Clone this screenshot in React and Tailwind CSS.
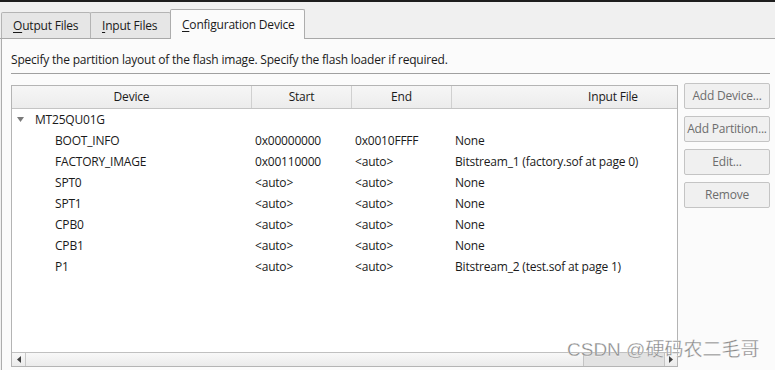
const ROWS = [
  { name: "BOOT_INFO", start: "0x00000000", end: "0x0010FFFF", file: "None" },
  { name: "FACTORY_IMAGE", start: "0x00110000", end: "<auto>", file: "Bitstream_1 (factory.sof at page 0)" },
  { name: "SPT0", start: "<auto>", end: "<auto>", file: "None" },
  { name: "SPT1", start: "<auto>", end: "<auto>", file: "None" },
  { name: "CPB0", start: "<auto>", end: "<auto>", file: "None" },
  { name: "CPB1", start: "<auto>", end: "<auto>", file: "None" },
  { name: "P1", start: "<auto>", end: "<auto>", file: "Bitstream_2 (test.sof at page 1)" },
];

const BUTTONS = ["Add Device...", "Add Partition...", "Edit...", "Remove"];

function Tab({ label, mnemonic, active, className = "" }) {
  const rest = label.slice(1);
  return (
    <div
      className={
        active
          ? `h-[30px] -mb-px bg-[#fbfbfb] border border-b-0 border-[#adadad] rounded-t-[2px] flex items-center pl-[11px] whitespace-nowrap ${className}`
          : `h-[26px] bg-[#e6e6e6] border border-b-0 border-[#b4b4b4] rounded-t-[2px] flex items-center pl-[11px] whitespace-nowrap ${className}`
      }
    >
      <span className="text-[#1a1a1a]">
        <span className="underline underline-offset-2">{mnemonic}</span>
        {rest}
      </span>
    </div>
  );
}

function Row({ children }) {
  return <div className="flex h-[21px] items-center whitespace-nowrap">{children}</div>;
}

export default function App() {
  return (
    <div className="w-[775px] h-[370px] overflow-hidden relative bg-[#f0f0f0] text-[12px] tracking-[-0.2px] text-[#1a1a1a] font-['Open_Sans',sans-serif]">
      <div className="h-[2px] bg-[#1e1e1e]" />

      {/* Tabs */}
      <div className="flex items-end h-[37px] pl-px border-b border-[#a8a8a8]">
        <Tab label="Output Files" mnemonic="O" className="w-[90px]" />
        <Tab label="Input Files" mnemonic="I" className="w-[81px] -ml-px" />
        <Tab label="Configuration Device" mnemonic="C" active className="w-[135px] -ml-px" />
      </div>

      {/* Panel */}
      <div className="ml-px h-[331px] border-l border-[#adadad] bg-[#fbfbfb] pl-[9px] pr-[5px] pt-[12px]">
        <p className="leading-[17px]">
          Specify the partition layout of the flash image. Specify the flash loader if required.
        </p>
        <div className="mt-[5px] h-px bg-[#a0a0a0]" />

        <div className="flex mt-[11px] gap-[6px]">
          {/* Table */}
          <div className="w-[667px] h-[282px] border border-[#b4b4b4] bg-white flex flex-col overflow-hidden">
            <div className="flex h-[23px] border-b border-[#c4c4c4] bg-gradient-to-b from-[#f6f6f6] to-[#ececec] shrink-0 whitespace-nowrap">
              <div className="w-[240px] shrink-0 border-r border-[#d0d0d0] flex items-center justify-center">Device</div>
              <div className="w-[100px] shrink-0 border-r border-[#d0d0d0] flex items-center justify-center">Start</div>
              <div className="w-[100px] shrink-0 border-r border-[#d0d0d0] flex items-center justify-center">End</div>
              <div className="w-[322px] shrink-0 flex items-center justify-center">Input File</div>
            </div>

            <div className="flex-1">
              <Row>
                <div className="w-[240px] shrink-0 flex items-center">
                  <svg width="7" height="5" viewBox="0 0 7 5" className="ml-[5px] mr-[11px]">
                    <path d="M0 0 H7 L3.5 5 Z" fill="#7a7a7a" />
                  </svg>
                  <span>MT25QU01G</span>
                </div>
              </Row>
              {ROWS.map((r) => (
                <Row key={r.name}>
                  <div className="w-[240px] shrink-0 pl-[43px]">{r.name}</div>
                  <div className="w-[100px] shrink-0 pl-[3px]">{r.start}</div>
                  <div className="w-[100px] shrink-0 pl-[3px]">{r.end}</div>
                  <div className="w-[322px] shrink-0 pl-[3px]">{r.file}</div>
                </Row>
              ))}
            </div>

            {/* Horizontal scrollbar */}
            <div className="h-[14px] border-t border-[#c0c0c0] bg-gradient-to-b from-[#f8f8f8] to-[#ebebeb] flex shrink-0">
              <div className="w-[14px] border-r border-[#c8c8c8] flex items-center justify-center">
                <svg width="4" height="7" viewBox="0 0 4 7">
                  <path d="M4 0 V7 L0 3.5 Z" fill="#404040" />
                </svg>
              </div>
              <div className="flex-1" />
              <div className="w-[82px] bg-[#e2e2e2] border-x border-[#c4c4c4]" />
              <div className="w-[12px] flex items-center justify-center">
                <svg width="4" height="7" viewBox="0 0 4 7">
                  <path d="M0 0 V7 L4 3.5 Z" fill="#404040" />
                </svg>
              </div>
            </div>
          </div>

          {/* Buttons */}
          <div className="w-[86px] flex flex-col gap-[7px] -mt-[2px]">
            {BUTTONS.map((b) => (
              <button
                key={b}
                className="h-[26px] border border-[#c4c4c4] rounded-[2px] bg-[#f0f0f0] text-[#6d6d6d] whitespace-nowrap"
              >
                {b}
              </button>
            ))}
          </div>
        </div>
      </div>

      <div className="absolute left-[567px] top-[338px] text-[19px] leading-[24px] tracking-normal text-[#8a8a8a] font-['Liberation_Sans','Noto_Sans_CJK_SC',sans-serif] [-webkit-text-stroke:0.3px_#ffffff]">
        CSDN @硬码农二毛哥
      </div>
    </div>
  );
}
